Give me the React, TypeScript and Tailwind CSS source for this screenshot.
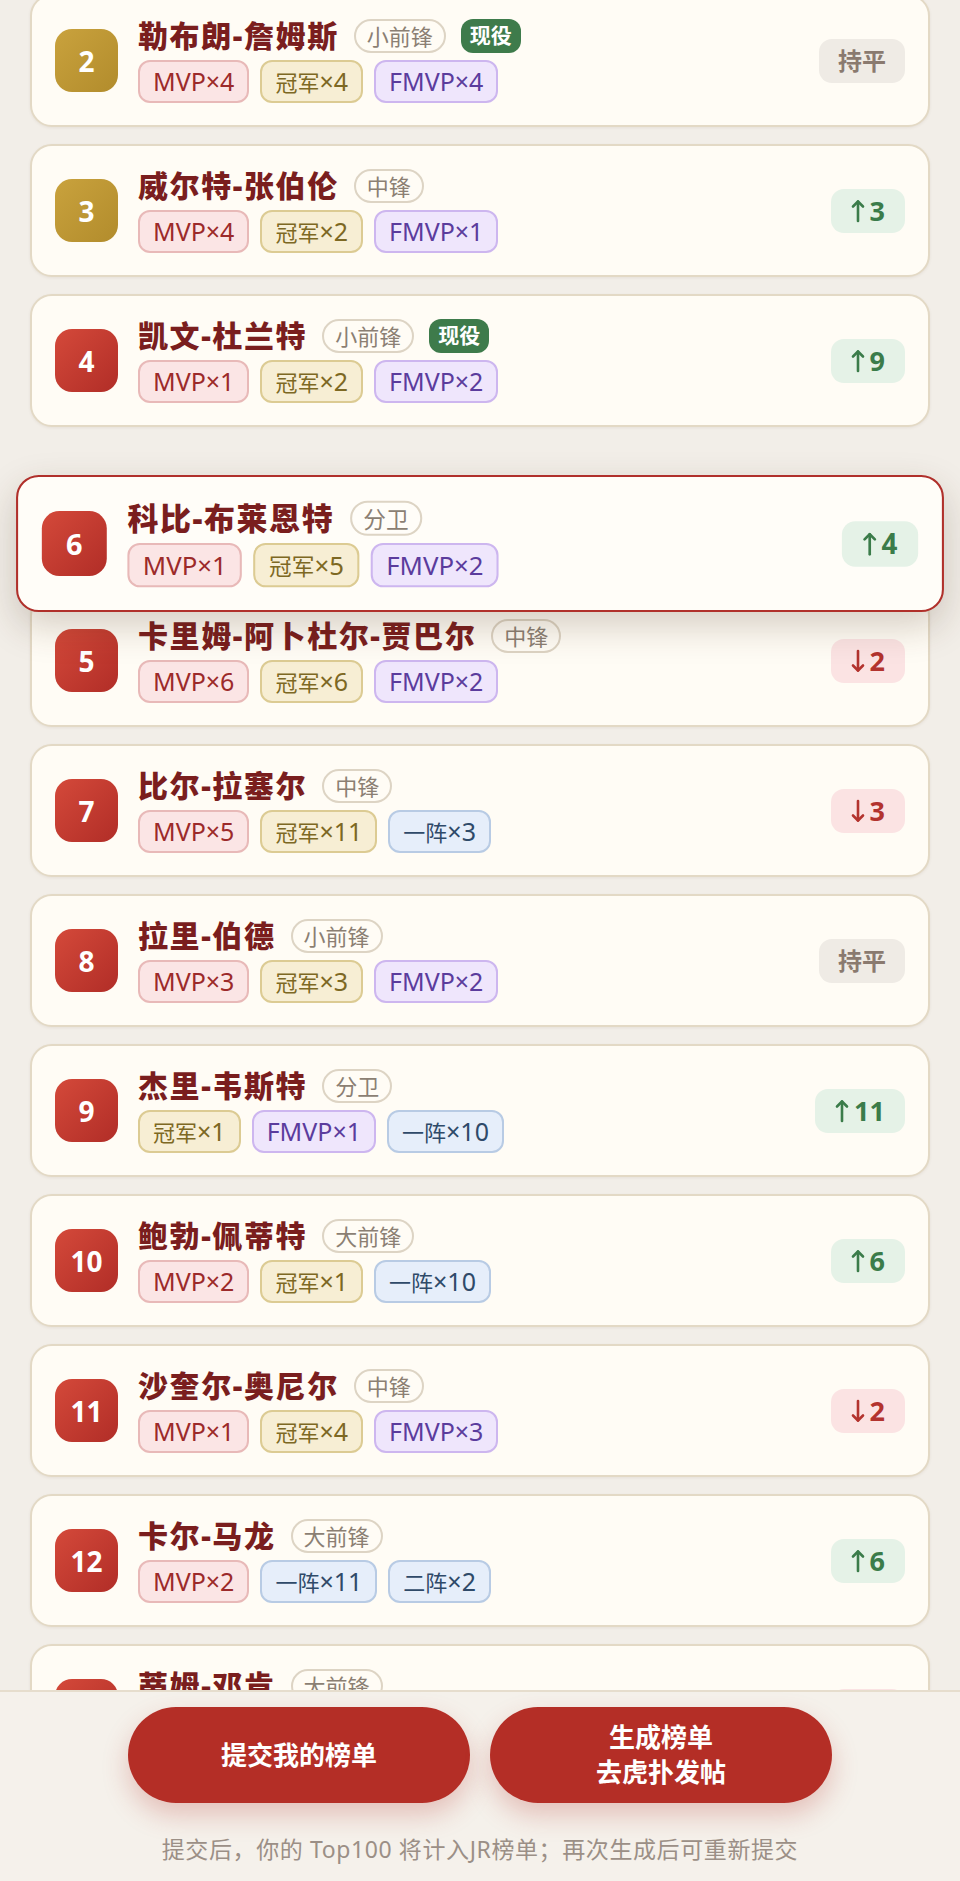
import React from 'react';

type Tag = { cjk: string; rest: string; kind: 'mvp' | 'champ' | 'fmvp' | 'team' };
type Player = {
  rank: number;
  name: string;
  pos: string;
  active?: boolean;
  tags: Tag[];
  trend: { dir: 'up' | 'down' | 'flat'; n?: number };
};

const mvp = (n: number): Tag => ({ cjk: '', rest: `MVP×${n}`, kind: 'mvp' });
const champ = (n: number): Tag => ({ cjk: '冠军', rest: `×${n}`, kind: 'champ' });
const fmvp = (n: number): Tag => ({ cjk: '', rest: `FMVP×${n}`, kind: 'fmvp' });
const team = (t: string, n: number): Tag => ({ cjk: t, rest: `×${n}`, kind: 'team' });

const before: Player[] = [
  { rank: 2, name: '勒布朗-詹姆斯', pos: '小前锋', active: true, tags: [mvp(4), champ(4), fmvp(4)], trend: { dir: 'flat' } },
  { rank: 3, name: '威尔特-张伯伦', pos: '中锋', tags: [mvp(4), champ(2), fmvp(1)], trend: { dir: 'up', n: 3 } },
  { rank: 4, name: '凯文-杜兰特', pos: '小前锋', active: true, tags: [mvp(1), champ(2), fmvp(2)], trend: { dir: 'up', n: 9 } },
];

const after: Player[] = [
  { rank: 5, name: '卡里姆-阿卜杜尔-贾巴尔', pos: '中锋', tags: [mvp(6), champ(6), fmvp(2)], trend: { dir: 'down', n: 2 } },
  { rank: 7, name: '比尔-拉塞尔', pos: '中锋', tags: [mvp(5), champ(11), team('一阵', 3)], trend: { dir: 'down', n: 3 } },
  { rank: 8, name: '拉里-伯德', pos: '小前锋', tags: [mvp(3), champ(3), fmvp(2)], trend: { dir: 'flat' } },
  { rank: 9, name: '杰里-韦斯特', pos: '分卫', tags: [champ(1), fmvp(1), team('一阵', 10)], trend: { dir: 'up', n: 11 } },
  { rank: 10, name: '鲍勃-佩蒂特', pos: '大前锋', tags: [mvp(2), champ(1), team('一阵', 10)], trend: { dir: 'up', n: 6 } },
  { rank: 11, name: '沙奎尔-奥尼尔', pos: '中锋', tags: [mvp(1), champ(4), fmvp(3)], trend: { dir: 'down', n: 2 } },
  { rank: 12, name: '卡尔-马龙', pos: '大前锋', tags: [mvp(2), team('一阵', 11), team('二阵', 2)], trend: { dir: 'up', n: 6 } },
  { rank: 13, name: '蒂姆-邓肯', pos: '大前锋', tags: [mvp(2), champ(5), fmvp(3)], trend: { dir: 'down', n: 1 } },
];

const dragged: Player = {
  rank: 6, name: '科比-布莱恩特', pos: '分卫', tags: [mvp(1), champ(5), fmvp(2)], trend: { dir: 'up', n: 4 },
};

const tagStyle: Record<Tag['kind'], string> = {
  mvp: 'bg-[#fbe5e5] border-[#e8b9b8] text-[#9c2a2a]',
  champ: 'bg-[#f7eed4] border-[#dccb93] text-[#7d6823]',
  fmvp: 'bg-[#efe6fc] border-[#cdb6ef] text-[#5b3c9d]',
  team: 'bg-[#e6eefa] border-[#b8cbe4] text-[#2f4a69]',
};

const Arrow = ({ down }: { down?: boolean }) => (
  <svg width="14" height="24" viewBox="0 0 14 24" fill="none" stroke="currentColor" strokeWidth="2.6" strokeLinecap="round" strokeLinejoin="round" className={down ? 'rotate-180' : ''}>
    <path d="M7 22V2.5" />
    <path d="M2 7.5L7 2.5L12 7.5" />
  </svg>
);

const Trend = ({ t }: { t: Player['trend'] }) => {
  if (t.dir === 'flat') {
    return (
      <div className="h-[44px] px-[19px] rounded-[13px] bg-[#efebe5] text-[#8a7a6f] text-[24px] font-bold flex items-center">
        持平
      </div>
    );
  }
  const up = t.dir === 'up';
  return (
    <div
      className={`h-[44px] px-[20px] rounded-[13px] text-[27px] font-bold flex items-center gap-[5px] ${
        up ? 'bg-[#e5f2e7] text-[#3b7c4a]' : 'bg-[#fbe3e3] text-[#b3332e]'
      }`}
    >
      <Arrow down={!up} />
      <span className="leading-none">{t.n}</span>
    </div>
  );
};

const Card = ({ p, lifted }: { p: Player; lifted?: boolean }) => {
  const gold = p.rank <= 3;
  return (
    <div
      className={`h-[133px] shrink-0 rounded-[22px] border-2 flex items-center gap-[20px] px-[23px] ${
        lifted
          ? 'bg-[#fffdf8] border-[#b0302b] shadow-[0_14px_36px_rgba(70,45,25,0.22)]'
          : 'bg-[#fffcf5] border-[#e3d9c5] shadow-[0_1px_3px_rgba(90,70,40,0.08)]'
      }`}
    >
      <div
        className={`w-[63px] h-[63px] rounded-[17px] flex items-center justify-center text-white text-[28px] font-bold shrink-0 ${
          gold ? 'bg-gradient-to-br from-[#c9a23d] to-[#b28c2c]' : 'bg-gradient-to-br from-[#d4493a] to-[#b12d27]'
        }`}
      >
        {p.rank}
      </div>
      <div className="flex-1 min-w-0 flex flex-col gap-[7px]">
        <div className="h-[35px] flex items-center gap-[15px]">
          <span className="text-[30px] leading-none font-black text-[#7a1e1e] tracking-[1.6px]">{p.name}</span>
          <span className="h-[34px] px-[11px] rounded-full border-2 border-[#ddd4c4] text-[#8b7f73] text-[22px] leading-none flex items-center">
            {p.pos}
          </span>
          {p.active && (
            <span className="h-[34px] px-[9px] rounded-[12px] bg-[#3e7b4b] text-white text-[21px] font-bold leading-none flex items-center">
              现役
            </span>
          )}
        </div>
        <div className="flex gap-[11px]">
          {p.tags.map(tag => (
            <span
              key={tag.cjk + tag.rest}
              className={`h-[43px] px-[13px] rounded-[12px] border-2 leading-none flex items-center ${tagStyle[tag.kind]}`}
            >
              {tag.cjk && <span className="text-[22px] leading-none">{tag.cjk}</span>}
              <span className="text-[25px] leading-none">{tag.rest}</span>
            </span>
          ))}
        </div>
      </div>
      <Trend t={p.trend} />
    </div>
  );
};

export default function App() {
  return (
    <div className="relative h-[1881px] overflow-hidden bg-[#f2eee8] font-['Noto_Sans','Noto_Sans_CJK_SC',sans-serif]">
      <div className="-mt-[6px] flex flex-col gap-[17px] px-[30px]">
        {before.map(p => (
          <Card key={p.rank} p={p} />
        ))}
        {/* drop slot for the dragged card */}
        <div className="h-[133px] shrink-0" />
        {after.map(p => (
          <Card key={p.rank} p={p} />
        ))}
      </div>

      {/* card being dragged */}
      <div className="absolute top-[477px] left-[30px] w-[900px] scale-[1.031] z-10">
        <Card p={dragged} lifted />
      </div>

      {/* bottom action bar */}
      <div className="absolute bottom-0 left-0 right-0 h-[191px] z-20 bg-[#f5f1eb] border-t-2 border-[#e6ddcd] flex flex-col items-center pt-[15px]">
        <div className="flex gap-[20px]">
          <button className="w-[342px] h-[96px] rounded-full bg-[#b42e26] text-white text-[26px] font-bold shadow-[0_12px_26px_rgba(180,46,38,0.25)]">
            提交我的榜单
          </button>
          <button className="w-[342px] h-[96px] rounded-full bg-[#b42e26] text-white text-[26px] font-bold leading-[35px] shadow-[0_12px_26px_rgba(180,46,38,0.25)]">
            生成榜单
            <br />
            去虎扑发帖
          </button>
        </div>
        <p className="mt-[31px] text-[23px] leading-[30px] tracking-[0.6px] text-[#9b8f86]">
          提交后，你的 Top100 将计入JR榜单；再次生成后可重新提交
        </p>
      </div>
    </div>
  );
}
